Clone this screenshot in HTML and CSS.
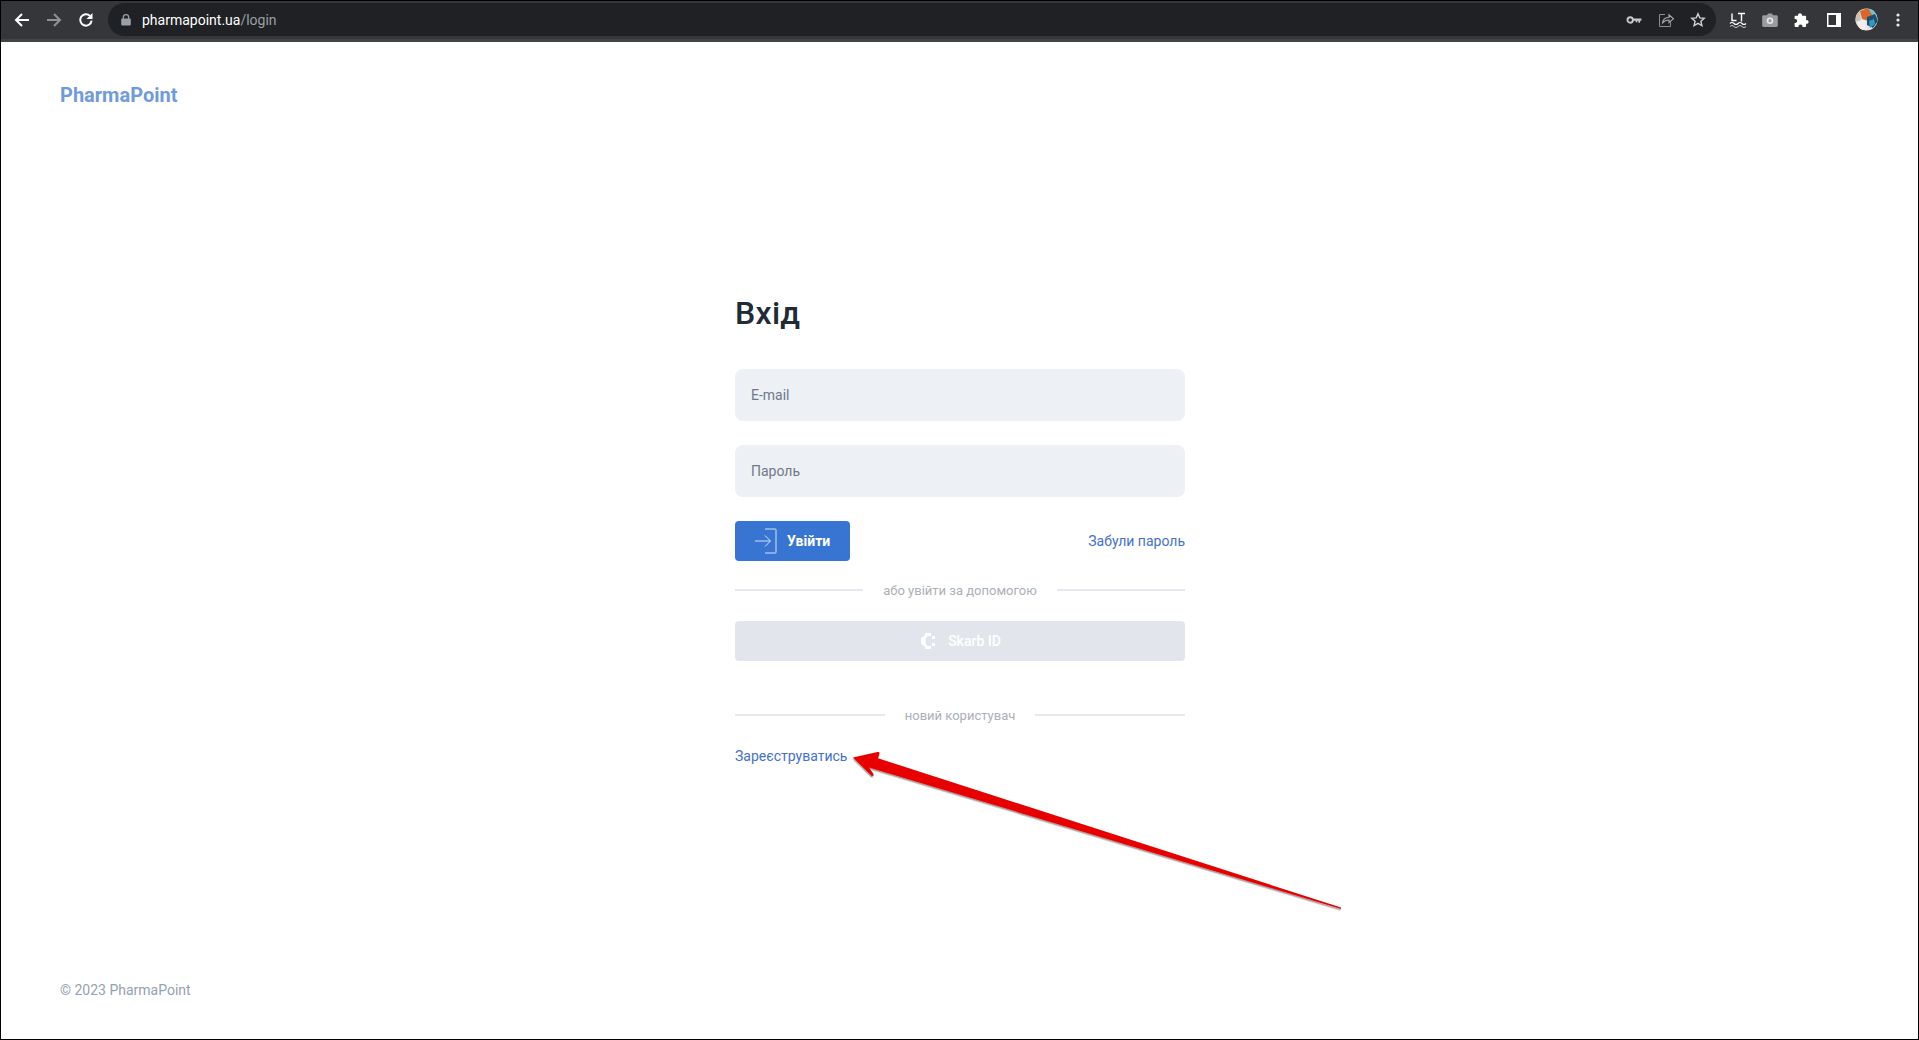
FILE: index.html
```html
<!DOCTYPE html>
<html lang="uk">
<head>
<meta charset="utf-8">
<title>PharmaPoint</title>
<link rel="stylesheet" href="styles.css">
</head>
<body>
<div class="frame">
  <div class="toolbar">
    <div class="tb-btn"><svg width="16" height="16" viewBox="0 0 16 16"><path d="M15 8H2M8 2 2 8l6 6" class="ic-stroke"/></svg></div>
    <div class="tb-btn dim"><svg width="16" height="16" viewBox="0 0 16 16"><path d="M1 8h13M8 2l6 6-6 6" class="ic-stroke"/></svg></div>
    <div class="tb-btn"><svg width="16" height="16" viewBox="0 0 16 16"><path d="M13.6 8.6A5.7 5.7 0 1 1 12 3.9" class="ic-stroke"/><path d="M14.5 1v6h-6z" class="ic-fill"/></svg></div>
    <div class="omnibox">
      <svg class="lock" width="10" height="12" viewBox="0 0 10 12"><path d="M2.3 5V3.4a2.7 2.7 0 0 1 5.4 0V5" fill="none" stroke="#9aa0a6" stroke-width="1.3"/><rect y="4.6" width="9.6" height="7" x=".2" rx="1" fill="#9aa0a6"/></svg>
      <span class="url">pharmapoint.ua<span class="url-path">/login</span></span>
      <div class="omni-actions">
        <svg width="16" height="16" viewBox="0 0 16 16"><circle cx="4.2" cy="8" r="2.7" fill="none" stroke="#c6c8cb" stroke-width="1.9"/><path d="M7 6.6h8.4v2.2h-1.3v2h-1.7v-2h-1v1.4H9.7V8.8H7z" fill="#c6c8cb"/></svg>
        <svg width="16" height="16" viewBox="0 0 16 16"><path d="M7 2.500H1.500v12h11V10" fill="none" stroke="#8b8d90" stroke-width="1"/><path d="M4.500 11c.4-3.700 3-5.500 6.500-5.500V2.800L15.500 6.800 11 10.500V8C8.500 8 6.300 8.800 4.500 11z" fill="none" stroke="#a8aaad" stroke-width="1.100"/></svg>
        <svg width="16" height="16" viewBox="0 0 16 16"><path d="m8 1.800 1.800 4.100 4.400.4-3.300 2.900 1 4.400L8 11.300l-3.900 2.300 1-4.400-3.300-2.900 4.400-.4z" fill="none" stroke="#d0d1d3" stroke-width="1.400"/></svg>
      </div>
    </div>
    <div class="tb-btn"><svg width="18" height="16" viewBox="0 0 18 16"><path d="M3 1.500v7h4.500M9 1.500h7M12.500 1.500v8" fill="none" stroke="#fff" stroke-width="1.400"/><path d="M1 11.500c1.300-1.300 2.700-1.300 4 0s2.700 1.300 4 0 2.700-1.300 4 0 2.700 1.300 4 0" fill="none" stroke="#fff" stroke-width="1.100"/><path d="M1 14.500c1.300-1.300 2.700-1.300 4 0s2.700 1.300 4 0 2.700-1.300 4 0 2.700 1.300 4 0" fill="none" stroke="#ddd" stroke-width=".9"/></svg></div>
    <div class="tb-btn"><svg width="16" height="14" viewBox="0 0 16 14"><path d="M5 2.200 6 .5h4l1 1.700h3.400c.8 0 1.400.6 1.400 1.400v9c0 .8-.6 1.400-1.400 1.400H1.600c-.8 0-1.400-.6-1.400-1.400v-9c0-.8.600-1.400 1.400-1.400z" fill="#9b9c9e"/><circle cx="8" cy="7.800" r="3.300" fill="#e8e8e9"/><circle cx="8" cy="7.800" r="1.700" fill="#9b9c9e"/></svg></div>
    <div class="tb-btn"><svg width="16" height="16" viewBox="0 0 16 16"><path d="M6 1.300c1.200 0 2 .8 2 1.900v.6h3.200c.5 0 .9.400.9.900V8h.6c1.100 0 1.900.8 1.900 1.900s-.8 1.900-1.900 1.900h-.6V14c0 .5-.4.900-.9.900H8.500v-.7c0-1.100-.9-1.800-2-1.800s-2 .7-2 1.800v.7H1.500c-.5 0-.9-.4-.9-.9v-3.100h.7c1.100 0 1.900-.8 1.900-1.900S2.400 7.100 1.300 7.100H.6V4.700c0-.5.400-.9.900-.9H4v-.6c0-1.100.8-1.900 2-1.900z" fill="#fff"/></svg></div>
    <div class="tb-btn"><svg width="14" height="14" viewBox="0 0 14 14"><rect width="14" height="14" fill="#fff"/><rect x="1.500" y="2" width="7.500" height="10" fill="#35363a"/></svg></div>
    <div class="tb-btn"><svg width="23" height="23" viewBox="0 0 23 23"><defs><clipPath id="ava"><circle cx="11.500" cy="11.500" r="11"/></clipPath></defs><g clip-path="url(#ava)"><rect width="23" height="23" fill="#e9e4df"/><path d="M12 0h11v12H15z" fill="#6fc3d0"/><path d="M5 3 13 0l4 7-3 6-7-2z" fill="#d9672a"/><path d="M12 9l8-3 3 7-5 7-6-3z" fill="#1f4f6e"/><path d="M14 13l5-2 1 5-5 4z" fill="#2f9bc4"/><path d="M2 13l7-1 3 9-7 2z" fill="#f2efec"/><path d="M0 6l5-2 1 8-6 2z" fill="#c9c2bb"/></g></svg></div>
    <div class="tb-btn"><svg width="4" height="14" viewBox="0 0 4 14"><circle cx="2" cy="2" r="1.600" fill="#e8eaed"/><circle cx="2" cy="7" r="1.600" fill="#e8eaed"/><circle cx="2" cy="12" r="1.600" fill="#e8eaed"/></svg></div>
  </div>

  <div class="page">
    <header class="brand">PharmaPoint</header>

    <main class="login">
      <h1 class="title">Вхід</h1>
      <div class="field">E-mail</div>
      <div class="field">Пароль</div>
      <div class="actions">
        <button class="btn-primary" type="button">
          <svg width="22" height="26" viewBox="0 0 22 26"><path d="M0 13h15M10 7.500l5.500 5.500-5.500 5.500M10 1h10.500c.3 0 .5.200.5.500v23c0 .3-.2.500-.5.500H10" fill="none" stroke="#d5e1f5" stroke-width="1"/></svg>
          <span>Увійти</span>
        </button>
        <a class="link" href="#">Забули пароль</a>
      </div>
      <div class="divider"><span>або увійти за допомогою</span></div>
      <button class="btn-skarb" type="button">
        <svg width="14" height="16" viewBox="0 0 14 16"><path d="M4 0H10V3H6.500L4.500 5.500V10.500L6.500 13H10V16H4V13.500L0 11V5L4 2.500ZM11 3h3v3h-3zM11 10h3v3h-3z" fill="#fff"/></svg>
        <span>Skarb ID</span>
      </button>
      <div class="divider divider-new"><span>новий користувач</span></div>
      <a class="link link-register" href="#">Зареєструватись</a>
    </main>

    <footer class="copyright">© 2023 PharmaPoint</footer>

    <svg class="annotation" width="500" height="170" viewBox="0 0 500 170">
      <defs><filter id="shadow" x="-5%" y="-20%" width="110%" height="140%"><feDropShadow dx="-.5" dy="1.500" stdDeviation=".6" flood-color="#000" flood-opacity=".4"/></filter></defs>
      <path d="M1 9.500 25.500 4Q28 3.600 27.500 5.500L26 10.300 489 159.500V161L17 19.500 21.500 26Q22 28.500 19.500 27.800Z" fill="#e80000" filter="url(#shadow)"/>
    </svg>
  </div>
</div>
</body>
</html>
```
FILE: styles.css
```css
* { box-sizing: border-box; }
html, body { margin: 0; height: 100%; }
body { font-family: Roboto, "Noto Sans", sans-serif; background: #fff; }

.frame {
  height: 1040px;
  border: 1px solid #000;
  display: flex;
  flex-direction: column;
  overflow: hidden;
}

.toolbar {
  flex: none;
  height: 41px;
  padding: 1px 4px 2px 5px;
  background: #35363a;
  border-bottom: 3px solid #434448;
  display: flex;
  align-items: center;
}
.tb-btn {
  width: 32px;
  height: 32px;
  flex: none;
  display: flex;
  align-items: center;
  justify-content: center;
}
.tb-btn.dim { opacity: .45; }
.ic-stroke { fill: none; stroke: #fff; stroke-width: 2; }
.ic-fill { fill: #fff; }

.omnibox {
  flex: 1;
  height: 33px;
  margin: 0 6px;
  padding: 0 10px 0 13px;
  border-radius: 17px;
  background: #202124;
  display: flex;
  align-items: center;
}
.lock { flex: none; margin-right: 11px; }
.url { font-size: 14px; color: #fff; }
.url-path { color: #9aa0a6; }
.omni-actions { margin-left: auto; display: flex; gap: 16px; }

.page {
  flex: 1;
  position: relative;
  display: flex;
  flex-direction: column;
  padding-left: 1px;
  background: #fff;
}
.brand {
  padding: 39px 0 0 58px;
  font-size: 20px;
  line-height: 28px;
  font-weight: 700;
  color: #6f9bdc;
}
.login {
  width: 450px;
  margin: 183px auto 0;
}
.title {
  margin: 0 0 35px;
  font-size: 32px;
  line-height: 42px;
  font-weight: 500;
  letter-spacing: .3px;
  color: #212b36;
}
.field {
  height: 52px;
  margin-bottom: 24px;
  padding: 0 16px;
  border-radius: 8px;
  background: #edf0f5;
  display: flex;
  align-items: center;
  font-size: 14px;
  color: #6f7985;
}
.actions {
  display: flex;
  justify-content: space-between;
  align-items: center;
}
.btn-primary {
  width: 115px;
  height: 40px;
  padding: 0 0 0 20px;
  border: 0;
  border-radius: 4px;
  background: #3875d3;
  color: #fff;
  font: 700 14px Roboto, sans-serif;
  display: flex;
  align-items: center;
  gap: 10px;
}
.link {
  font-size: 14px;
  color: #4470d0;
  text-decoration: none;
}
.divider {
  margin-top: 19px;
  height: 20px;
  display: flex;
  align-items: center;
  font-size: 13px;
  color: #abb0b7;
  gap: 20px;
}
.divider::before, .divider::after {
  content: "";
  flex: 1;
  height: 2px;
  background: #e6e8ed;
}
.btn-skarb {
  width: 100%;
  height: 40px;
  margin-top: 21px;
  padding: 0 0 0 2px;
  border: 0;
  border-radius: 4px;
  background: #e2e6ec;
  color: #fff;
  font: 500 14px Roboto, sans-serif;
  display: flex;
  align-items: center;
  justify-content: center;
  gap: 13px;
}
.divider-new { margin-top: 44px; }
.link-register { display: block; margin-top: 23px; width: max-content; }
.copyright {
  margin-top: auto;
  padding: 0 0 41px 58px;
  font-size: 14px;
  line-height: 16px;
  color: #95a1b3;
}
.annotation {
  position: absolute;
  left: 851px;
  top: 706px;
  pointer-events: none;
}
```
